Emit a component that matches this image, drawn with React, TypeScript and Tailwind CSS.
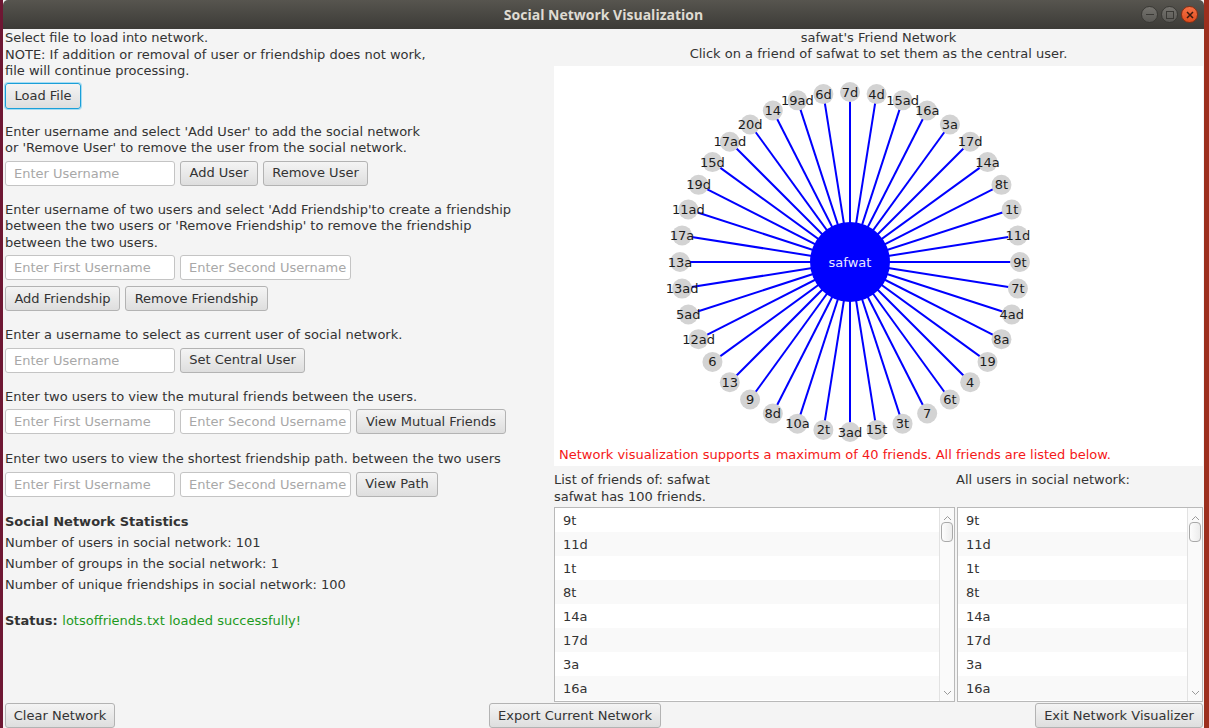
import type { ReactNode } from 'react';

const friends = [
  '9t', '11d', '1t', '8t', '14a', '17d', '3a', '16a', '15ad', '4d',
  '7d', '6d', '19ad', '14', '20d', '17ad', '15d', '19d', '11ad', '17a',
  '13a', '13ad', '5ad', '12ad', '6', '13', '9', '8d', '10a', '2t',
  '3ad', '15t', '3t', '7', '6t', '4', '19', '8a', '4ad', '7t',
];

function Btn({ className = '', focused = false, children }: { className?: string; focused?: boolean; children: ReactNode }) {
  return (
    <div
      className={`flex h-[25px] shrink-0 items-center justify-center rounded-[3px] border bg-gradient-to-b from-[#f4f4f4] to-[#dedede] text-[13px] text-[#333] ${
        focused ? 'border-[#1a9fd8] shadow-[0_0_0_1px_#a6dcf2]' : 'border-[#b3b3b3]'
      } ${className}`}
    >
      {children}
    </div>
  );
}

function Field({ placeholder, className = '' }: { placeholder: string; className?: string }) {
  return (
    <input
      readOnly
      placeholder={placeholder}
      className={`h-[25px] shrink-0 rounded-[3px] border border-[#c4c4c4] bg-white pl-[8px] text-[13px] text-[#333] outline-none placeholder:text-[#a8a8a8] ${className}`}
    />
  );
}

function Chevron({ up }: { up: boolean }) {
  return (
    <svg width="9" height="6" viewBox="0 0 9 6" className="text-[#9a9a9a]">
      <polyline points={up ? '1,5 4.5,1.5 8,5' : '1,1 4.5,4.5 8,1'} fill="none" stroke="currentColor" strokeWidth="1" />
    </svg>
  );
}

function ListBox({ items, className = '' }: { items: string[]; className?: string }) {
  return (
    <div className={`flex h-[195px] overflow-hidden border border-[#b9b9b9] bg-white ${className}`}>
      <div className="min-w-0 flex-1">
        {items.map((name, i) => (
          <div key={name} className={`flex h-[24px] items-center pl-[8px] pt-[1px] text-[13px] text-[#333] ${i % 2 ? 'bg-[#f9f9f9]' : 'bg-white'}`}>
            {name}
          </div>
        ))}
      </div>
      <div className="flex w-[15px] shrink-0 flex-col items-center border-l border-[#e2e2e2] bg-[#fafafa]">
        <div className="flex h-[13px] items-end">
          <Chevron up />
        </div>
        <div className="mt-[1px] h-[20px] w-[12px] rounded-[4px] border border-[#a9a9a9] bg-gradient-to-r from-[#fdfdfd] to-[#ececec]" />
        <div className="flex-1" />
        <div className="mb-[3px] flex h-[10px] items-center">
          <Chevron up={false} />
        </div>
      </div>
    </div>
  );
}

function Graph() {
  const cx = 296;
  const cy = 196;
  const r = 170;
  const nodes = friends.map((name, i) => {
    const a = (-i * 9 * Math.PI) / 180;
    return { name, x: cx + r * Math.cos(a), y: cy + r * Math.sin(a) };
  });
  return (
    <svg width="649" height="380" className="block">
      {nodes.map((n) => (
        <line key={`l-${n.name}`} x1={cx} y1={cy} x2={n.x} y2={n.y} stroke="#0000ff" strokeWidth="2" />
      ))}
      <circle cx={cx} cy={cy} r="40" fill="#0000ff" />
      <text x={cx} y={cy} textAnchor="middle" dominantBaseline="central" fill="#e8e8ff" fontSize="13" fontFamily="DejaVu Sans, sans-serif">
        safwat
      </text>
      {nodes.map((n) => (
        <g key={n.name}>
          <circle cx={n.x} cy={n.y} r="10" fill="#d3d3d3" />
          <text x={n.x} y={n.y} textAnchor="middle" dominantBaseline="central" fill="#1c1c1c" fontSize="13" fontFamily="DejaVu Sans, sans-serif">
            {n.name}
          </text>
        </g>
      ))}
    </svg>
  );
}

export default function App() {
  return (
    <div className="flex h-[728px] w-[1209px] overflow-hidden bg-[#8a2a22] font-['DejaVu_Sans',Verdana,sans-serif] text-[13px] text-[#333]">
      <div className="w-[3px] shrink-0 bg-[#6e1733]" />
      <div className="flex w-[1201px] shrink-0 flex-col bg-[#f4f4f4]">
        {/* title bar */}
        <div className="relative flex h-[29px] shrink-0 items-center justify-center rounded-t-[5px] bg-gradient-to-b from-[#57554f] to-[#3c3b37]">
          <span className="font-['Open_Sans',sans-serif] text-[14px] font-bold text-[#dfdbd2]">Social Network Visualization</span>
          <div className="absolute right-[6px] top-[6px] flex gap-[3px]">
            <div className="flex h-[17px] w-[17px] items-center justify-center rounded-full border border-[#3a3935] bg-gradient-to-b from-[#75736e] to-[#5a5955]">
              <div className="h-[1.5px] w-[8px] bg-[#3a3935]" />
            </div>
            <div className="flex h-[17px] w-[17px] items-center justify-center rounded-full border border-[#3a3935] bg-gradient-to-b from-[#75736e] to-[#5a5955]">
              <div className="h-[8px] w-[8px] border-[1.5px] border-[#3a3935]" />
            </div>
            <div className="flex h-[17px] w-[17px] items-center justify-center rounded-full border border-[#8c2e12] bg-gradient-to-b from-[#f57145] to-[#e04d1c]">
              <svg width="8" height="8" viewBox="0 0 8 8">
                <path d="M1 1L7 7M7 1L1 7" stroke="#3b1a0e" strokeWidth="1.5" />
              </svg>
            </div>
          </div>
        </div>

        {/* body */}
        <div className="flex h-[674px] shrink-0">
          {/* left controls */}
          <div className="flex w-[551px] shrink-0 flex-col pl-[2px] pt-[1px]">
            <div className="leading-[16.5px]">
              <p>Select file to load into network.</p>
              <p>NOTE: If addition or removal of user or friendship does not work,</p>
              <p>file will continue processing.</p>
            </div>
            <Btn focused className="mt-[3px] h-[26px] w-[76px]">Load File</Btn>

            <div className="mt-[15px] leading-[16.5px]">
              <p>Enter username and select 'Add User' to add the social network</p>
              <p>or 'Remove User' to remove the user from the social network.</p>
            </div>
            <div className="mt-[4px] flex gap-[5px]">
              <Field placeholder="Enter Username" className="w-[170px]" />
              <Btn className="w-[78px]">Add User</Btn>
              <Btn className="w-[105px]">Remove User</Btn>
            </div>

            <div className="mt-[16px] leading-[16.5px]">
              <p>Enter username of two users and select 'Add Friendship'to create a friendship</p>
              <p>between the two users or 'Remove Friendship' to remove the friendship</p>
              <p>between the two users.</p>
            </div>
            <div className="mt-[4px] flex gap-[5px]">
              <Field placeholder="Enter First Username" className="w-[170px]" />
              <Field placeholder="Enter Second Username" className="w-[171px]" />
            </div>
            <div className="mt-[6px] flex gap-[5px]">
              <Btn className="w-[115px]">Add Friendship</Btn>
              <Btn className="w-[143px]">Remove Friendship</Btn>
            </div>

            <p className="mt-[16px] leading-[16.5px]">Enter a username to select as current user of social network.</p>
            <div className="mt-[4px] flex gap-[5px]">
              <Field placeholder="Enter Username" className="w-[170px]" />
              <Btn className="w-[125px]">Set Central User</Btn>
            </div>

            <p className="mt-[16px] leading-[16.5px]">Enter two users to view the mutural friends between the users.</p>
            <div className="mt-[4px] flex gap-[5px]">
              <Field placeholder="Enter First Username" className="w-[170px]" />
              <Field placeholder="Enter Second Username" className="w-[171px]" />
              <Btn className="w-[150px]">View Mutual Friends</Btn>
            </div>

            <p className="mt-[17px] leading-[16.5px]">Enter two users to view the shortest friendship path. between the two users</p>
            <div className="mt-[4px] flex gap-[5px]">
              <Field placeholder="Enter First Username" className="w-[170px]" />
              <Field placeholder="Enter Second Username" className="w-[171px]" />
              <Btn className="w-[82px]">View Path</Btn>
            </div>

            <div className="mt-[14px] leading-[21px]">
              <p className="font-bold">Social Network Statistics</p>
              <p>Number of users in social network: 101</p>
              <p>Number of groups in the social network: 1</p>
              <p>Number of unique friendships in social network: 100</p>
            </div>
            <p className="mt-[15px] leading-[21px]">
              <span className="font-bold">Status: </span>
              <span className="text-[#1d9a1d]">lotsoffriends.txt loaded successfully!</span>
            </p>
          </div>

          {/* right network view */}
          <div className="flex w-[649px] shrink-0 flex-col">
            <div className="pt-[1px] text-center leading-[16px]">
              <p>safwat's Friend Network</p>
              <p>Click on a friend of safwat to set them as the central user.</p>
            </div>
            <div className="mt-[4px] flex h-[400px] flex-col bg-white">
              <Graph />
              <p className="pl-[5px] pt-[1px] leading-[16px] text-[#f51818]">
                Network visualization supports a maximum of 40 friends. All friends are listed below.
              </p>
            </div>
            <div className="mt-[5px] flex leading-[17px]">
              <div className="w-[402px]">
                <p>List of friends of: safwat</p>
                <p>safwat has 100 friends.</p>
              </div>
              <p>All users in social network:</p>
            </div>
            <div className="mt-[2px] flex gap-[2px]">
              <ListBox items={friends.slice(0, 9)} className="w-[401px]" />
              <ListBox items={friends.slice(0, 9)} className="w-[246px]" />
            </div>
          </div>
        </div>

        {/* bottom actions */}
        <div className="flex pl-[2px] pr-[1px]">
          <Btn className="w-[110px]">Clear Network</Btn>
          <Btn className="ml-[374px] w-[172px]">Export Current Network</Btn>
          <Btn className="ml-auto w-[168px]">Exit Network Visualizer</Btn>
        </div>
      </div>
      <div className="flex-1 bg-[#9c2f1e]" />
    </div>
  );
}
